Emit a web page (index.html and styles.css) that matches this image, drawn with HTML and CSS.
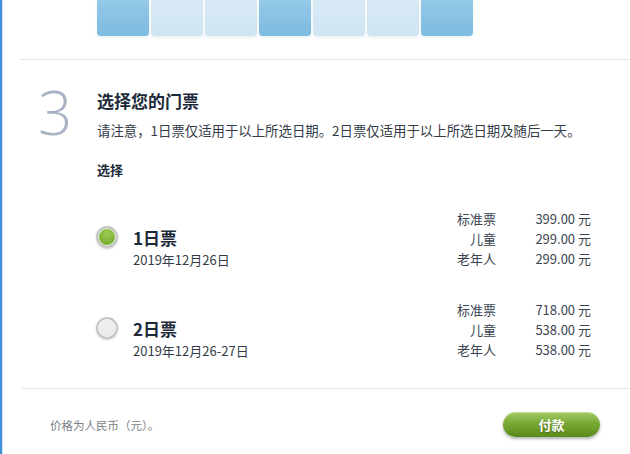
FILE: index.html
```html
<!DOCTYPE html>
<html lang="zh-CN">
<head>
    <meta charset="UTF-8">
    <meta name="viewport" content="width=device-width, initial-scale=1.0">
    <title>选择您的门票</title>
    <link rel="stylesheet" href="styles.css">
</head>
<body>
    <div class="page">
        <div class="calendar">
            <div class="day selected"></div>
            <div class="day"></div>
            <div class="day"></div>
            <div class="day selected"></div>
            <div class="day"></div>
            <div class="day"></div>
            <div class="day selected"></div>
        </div>
        <div class="divider"></div>

        <div class="step">
            <div class="step-number">3</div>
            <div class="step-body">
                <h2 class="step-title">选择您的门票</h2>
                <p class="notice">请注意，1日票仅适用于以上所选日期。2日票仅适用于以上所选日期及随后一天。</p>
                <div class="choose-label">选择</div>

                <div class="tickets">
                    <div class="ticket">
                        <span class="radio checked"></span>
                        <div class="ticket-name">
                            <div class="ticket-title">1日票</div>
                            <div class="ticket-date">2019年12月26日</div>
                        </div>
                        <div class="prices">
                            <span class="price-label">标准票</span><span class="price">399.00 元</span>
                            <span class="price-label">儿童</span><span class="price">299.00 元</span>
                            <span class="price-label">老年人</span><span class="price">299.00 元</span>
                        </div>
                    </div>
                    <div class="ticket">
                        <span class="radio"></span>
                        <div class="ticket-name">
                            <div class="ticket-title">2日票</div>
                            <div class="ticket-date">2019年12月26-27日</div>
                        </div>
                        <div class="prices">
                            <span class="price-label">标准票</span><span class="price">718.00 元</span>
                            <span class="price-label">儿童</span><span class="price">538.00 元</span>
                            <span class="price-label">老年人</span><span class="price">538.00 元</span>
                        </div>
                    </div>
                </div>
            </div>
        </div>

        <div class="divider bottom"></div>
        <div class="footer">
            <span class="currency-note">价格为人民币（元）。</span>
            <button type="button" class="pay-button">付款</button>
        </div>
    </div>
</body>
</html>
```

FILE: styles.css
```css
body {
    margin: 0;
    background: #fff;
    font-family: "Noto Sans CJK SC", "Noto Sans", sans-serif;
    color: #3a4350;
}
.page {
    min-height: 454px;
    border-left: 2px solid #3d8fd6;
    box-shadow: inset 1px 0 0 #d6e8f6;
    box-sizing: border-box;
}
.calendar {
    display: flex;
    gap: 2px;
    margin-left: 95px;
}
.day {
    width: 52px;
    height: 36px;
    border-radius: 0 0 4px 4px;
    background: linear-gradient(#d9eaf6, #d0e4f2);
    box-shadow: 0 2px 3px rgba(180, 205, 225, 0.25);
}
.day.selected {
    background: linear-gradient(#94c9e8, #7dbbe0);
}
.divider {
    height: 1px;
    background: #e3e3e3;
    margin: 23px 0 0 18px;
}
.divider.bottom {
    margin-top: 28px;
    margin-left: 20px;
}
.step {
    display: flex;
    padding-top: 30px;
}
.step-number {
    flex-shrink: 0;
    width: 59px;
    margin-left: 36px;
    margin-top: -8px;
    font-family: "Open Sans", sans-serif;
    font-weight: 300;
    font-size: 60px;
    line-height: 60px;
    color: #a7b3c2;
}
.step-body {
    flex: 1;
    min-width: 0;
    padding-right: 39px;
}
.step-title {
    margin: 0;
    font-size: 17px;
    line-height: 22px;
    font-weight: bold;
    color: #1d2a3a;
}
.notice {
    margin: 7px 0 0;
    font-size: 13.4px;
    line-height: 22px;
    white-space: nowrap;
    color: #333b47;
}
.choose-label {
    margin-top: 20px;
    font-size: 13px;
    line-height: 18px;
    font-weight: bold;
    color: #1d2a3a;
}
.tickets {
    margin-top: 30px;
    display: flex;
    flex-direction: column;
    gap: 31px;
}
.ticket {
    display: flex;
    align-items: flex-start;
}
.radio {
    width: 18px;
    height: 18px;
    margin: 17px 0 0 -1px;
    border-radius: 50%;
    border: 2px solid #c4c4c4;
    background: radial-gradient(circle at 50% 35%, #f2f2f2, #e2e2e2);
    box-shadow: 0 1px 2px rgba(0, 0, 0, 0.2), inset 0 0 0 1px #fff;
}
.radio.checked {
    background: radial-gradient(circle at 50% 30%, #9ccc4f, #6a9e28);
}
.ticket-name {
    margin: 18px 0 0 15px;
}
.ticket-title {
    font-size: 17px;
    line-height: 22px;
    font-weight: bold;
    color: #1d2a3a;
}
.ticket-date {
    margin-top: 2px;
    font-size: 13px;
    line-height: 18px;
    color: #333b47;
}
.prices {
    margin-left: auto;
    display: grid;
    grid-template-columns: auto 95px;
    font-size: 13px;
    line-height: 20px;
    color: #3a4350;
}
.price-label,
.price {
    text-align: right;
}
.footer {
    display: flex;
    align-items: center;
    justify-content: space-between;
    padding: 23px 30px 0 48px;
}
.currency-note {
    font-size: 11.5px;
    color: #7a7f86;
}
.pay-button {
    width: 97px;
    height: 25px;
    border: none;
    border-radius: 13px;
    background: linear-gradient(#a2cb66, #79a934 45%, #5b8a1b);
    box-shadow: 0 2px 3px rgba(0, 0, 0, 0.3), inset 0 1px 0 rgba(255, 255, 255, 0.35);
    color: #fff;
    font-family: "Noto Sans CJK SC", sans-serif;
    font-size: 13px;
    font-weight: bold;
    text-shadow: 0 1px 1px rgba(0, 0, 0, 0.3);
    cursor: pointer;
}
.pay-button:hover {
    background: linear-gradient(#85b448, #5f8f22);
}
```
